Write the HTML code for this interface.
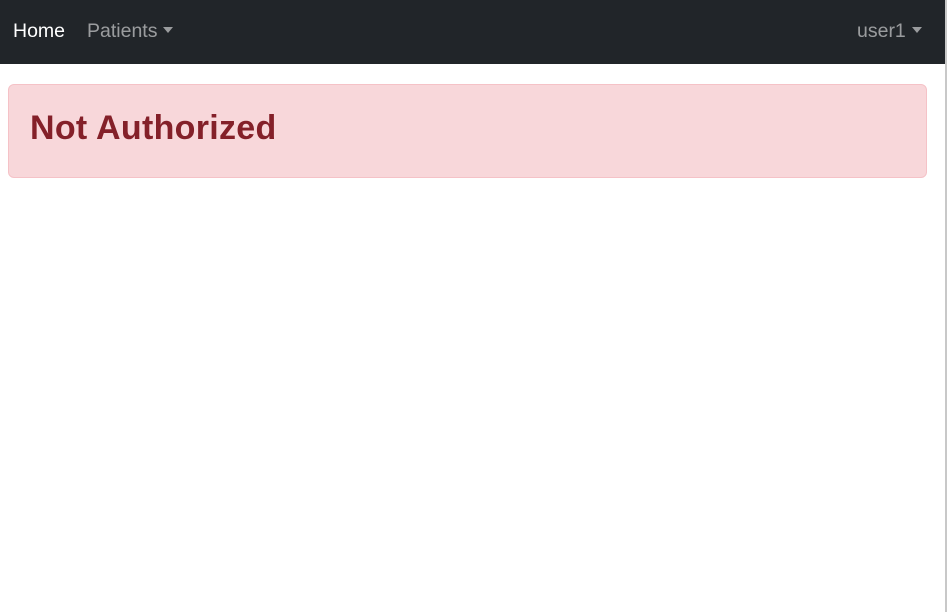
<!DOCTYPE html>
<html><head><style>
body{margin:0;width:947px;height:612px;background:#fff;font-family:"Liberation Sans",sans-serif;position:relative;overflow:hidden}
.r{position:absolute;right:0;top:0;width:2px;height:612px;background:#c8c8c8}
nav{position:absolute;left:0;top:0;width:945px;height:64px;background:#212529}
nav span{position:absolute;top:20px;font-size:19.5px;color:rgba(255,255,255,.55)}
.c{display:inline-block;width:0;height:0;border-left:5px solid transparent;border-right:5px solid transparent;border-top:6px solid currentColor;vertical-align:4px;margin-left:6px}
.a{position:absolute;left:8px;top:84px;width:917px;height:92px;background:#f8d7da;border:1px solid #f5c2c7;border-radius:6px}
.a h1{margin:0;position:absolute;left:21px;top:24px;font-size:34px;font-weight:bold;letter-spacing:0.3px;color:#842029}
</style></head><body>
<nav><span style="left:13px;color:#fff">Home</span><span style="left:87px">Patients<i class="c"></i></span><span style="left:857px">user1<i class="c"></i></span></nav>
<div class="r"></div>
<div class="a"><h1>Not Authorized</h1></div>
</body></html>
